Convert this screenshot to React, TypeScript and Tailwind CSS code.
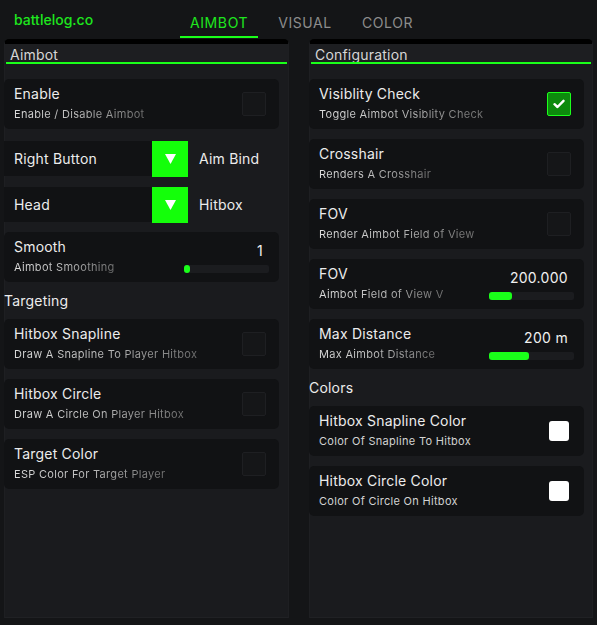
import React from 'react';

const font = { fontFamily: 'Inter, "Noto Sans", sans-serif' };

function Sub({ text, fade = true }: { text: string; fade?: boolean }) {
  if (!fade) {
    return <div className="mt-[4px] text-[11px] leading-[14px] tracking-[0.3px] text-[#d2d2d2]">{text}</div>;
  }
  return (
    <div className="mt-[4px] text-[11px] leading-[14px] tracking-[0.3px]">
      <span className="bg-gradient-to-r from-[#dcdcdc] via-[#bcbcbc] to-[#6e6e6e] bg-clip-text text-transparent">
        {text}
      </span>
    </div>
  );
}

function Title({ text }: { text: string }) {
  return <div className="text-[14px] leading-[18px] tracking-[0.2px] text-[#ececec]">{text}</div>;
}

function CheckCard({ title, sub, checked }: { title: string; sub: string; checked?: boolean }) {
  return (
    <div className="h-[50px] rounded-[5px] bg-[#111214] pl-[10px] pr-[13px] flex items-center justify-between">
      <div className="pb-[2px]">
        <Title text={title} />
        <Sub text={sub} />
      </div>
      {checked ? (
        <div className="w-[24px] h-[24px] rounded-[2px] bg-[#0d8a0d] border border-[#1cff1c] flex items-center justify-center">
          <svg width="12" height="10" viewBox="0 0 12 10">
            <path d="M1.5 5.2 L4.5 8 L10.5 1.8" fill="none" stroke="white" strokeWidth="2.4" strokeLinecap="round" strokeLinejoin="round" />
          </svg>
        </div>
      ) : (
        <div className="w-[24px] h-[24px] rounded-[2px] bg-[#151618] border border-[#1e1f22]" />
      )}
    </div>
  );
}

function ColorCard({ title, sub }: { title: string; sub: string }) {
  return (
    <div className="h-[50px] rounded-[5px] bg-[#111214] pl-[10px] pr-[15px] flex items-center justify-between">
      <div className="pb-[2px]">
        <Title text={title} />
        <Sub text={sub} fade={false} />
      </div>
      <div className="w-[20px] h-[20px] rounded-[3px] bg-white" />
    </div>
  );
}

function SliderCard({ title, sub, value, fill }: { title: string; sub: string; value: string; fill: number }) {
  return (
    <div className="h-[50px] rounded-[5px] bg-[#111214] pl-[10px] pr-[10px] flex items-center justify-between">
      <div className="pb-[2px]">
        <Title text={title} />
        <Sub text={sub} />
      </div>
      <div className="w-[85px] flex flex-col items-end">
        <div className="pr-[6px] text-[14px] leading-[18px] tracking-[0.3px] text-[#f0f0f0]">{value}</div>
        <div className="mt-[5px] w-[85px] h-[8px] rounded-[2px] bg-[#1b1c1f]">
          <div className="h-[8px] rounded-[3px] bg-[#1aff1a]" style={{ width: fill }} />
        </div>
      </div>
    </div>
  );
}

function Dropdown({ value, label }: { value: string; label: string }) {
  return (
    <div className="flex items-center h-[35px]">
      <div className="w-[148px] h-[35px] bg-[#111214] pl-[10px] pb-[1px] flex items-center text-[14px] tracking-[0.2px] text-[#ececec]">
        {value}
      </div>
      <div className="w-[36px] h-[36px] bg-[#14ff0a] flex items-center justify-center">
        <svg width="11" height="10" viewBox="0 0 11 10">
          <path d="M0 0 H11 L5.5 10 Z" fill="white" />
        </svg>
      </div>
      <div className="pl-[11px] pb-[1px] text-[14px] tracking-[0.2px] text-[#ececec]">{label}</div>
    </div>
  );
}

function Heading({ text }: { text: string }) {
  return <div className="h-[37px] flex items-center text-[14px] tracking-[0.2px] text-[#ececec]">{text}</div>;
}

function Panel({ title, pr, children }: { title: string; pr: string; children: React.ReactNode }) {
  return (
    <div className="h-[579px] rounded-t-[5px] border-t-[5px] border-black bg-[#1a1b1e] border-x border-b border-x-[#1e1f22] border-b-[#202124] flex flex-col">
      <div className="h-[18px] bg-[#1d1e21] pl-[5px] text-[14px] leading-[21px] tracking-[0.2px] text-[#d6d6d6]">{title}</div>
      <div className="relative h-[2px] bg-[#1aff1a] mx-[1px]" />
      <div className={`pt-[15px] ${pr}`}>{children}</div>
    </div>
  );
}

export default function App() {
  return (
    <div className="w-[597px] h-[625px] bg-[#141517] overflow-hidden" style={font}>
      <div className="h-[39px] flex items-end">
        <div className="w-[180px] h-[39px] pl-[14px] flex items-center text-[14px] font-medium text-[#1ee61e]">
          battlelog.co
        </div>
        <div className="flex items-end gap-[10px] h-[39px]">
          <div className="h-[39px] px-[10px] flex flex-col justify-between">
            <div className="pt-[12px] text-[14px] tracking-[0.6px] text-[#1ee61e]">AIMBOT</div>
            <div className="h-[2px] -mx-[10px] mb-[1px] bg-[#1aff1a]" />
          </div>
          <div className="h-[39px] px-[10px] pt-[12px] text-[14px] tracking-[0.6px] text-[#8c8c8c]">VISUAL</div>
          <div className="h-[39px] px-[10px] pt-[12px] text-[14px] tracking-[0.6px] text-[#8c8c8c]">COLOR</div>
        </div>
      </div>

      <div className="flex gap-[20px] pl-[4px]">
        <div className="w-[285px]">
          <Panel title="Aimbot" pr="pr-[9px]">
            <div className="-ml-[1px] flex flex-col">
              <CheckCard title="Enable" sub="Enable / Disable Aimbot" />
              <div className="mt-[12px]"><Dropdown value="Right Button" label="Aim Bind" /></div>
              <div className="mt-[11px]"><Dropdown value="Head" label="Hitbox" /></div>
              <div className="mt-[10px]"><SliderCard title="Smooth" sub="Aimbot Smoothing" value="1" fill={6} /></div>
              <Heading text="Targeting" />
              <div className="flex flex-col gap-[10px]">
                <CheckCard title="Hitbox Snapline" sub="Draw A Snapline To Player Hitbox" />
                <CheckCard title="Hitbox Circle" sub="Draw A Circle On Player Hitbox" />
                <CheckCard title="Target Color" sub="ESP Color For Target Player" />
              </div>
            </div>
          </Panel>
        </div>
        <div className="w-[284px]">
          <Panel title="Configuration" pr="pr-[8px]">
            <div className="-ml-[1px] flex flex-col">
              <div className="flex flex-col gap-[10px]">
                <CheckCard title="Visiblity Check" sub="Toggle Aimbot Visiblity Check" checked />
                <CheckCard title="Crosshair" sub="Renders A Crosshair" />
                <CheckCard title="FOV" sub="Render Aimbot Field of View" />
                <SliderCard title="FOV" sub="Aimbot Field of View V" value="200.000" fill={23} />
                <SliderCard title="Max Distance" sub="Max Aimbot Distance" value="200 m" fill={40} />
              </div>
              <Heading text="Colors" />
              <div className="flex flex-col gap-[10px]">
                <ColorCard title="Hitbox Snapline Color" sub="Color Of Snapline To Hitbox" />
                <ColorCard title="Hitbox Circle Color" sub="Color Of Circle On Hitbox" />
              </div>
            </div>
          </Panel>
        </div>
      </div>
    </div>
  );
}
